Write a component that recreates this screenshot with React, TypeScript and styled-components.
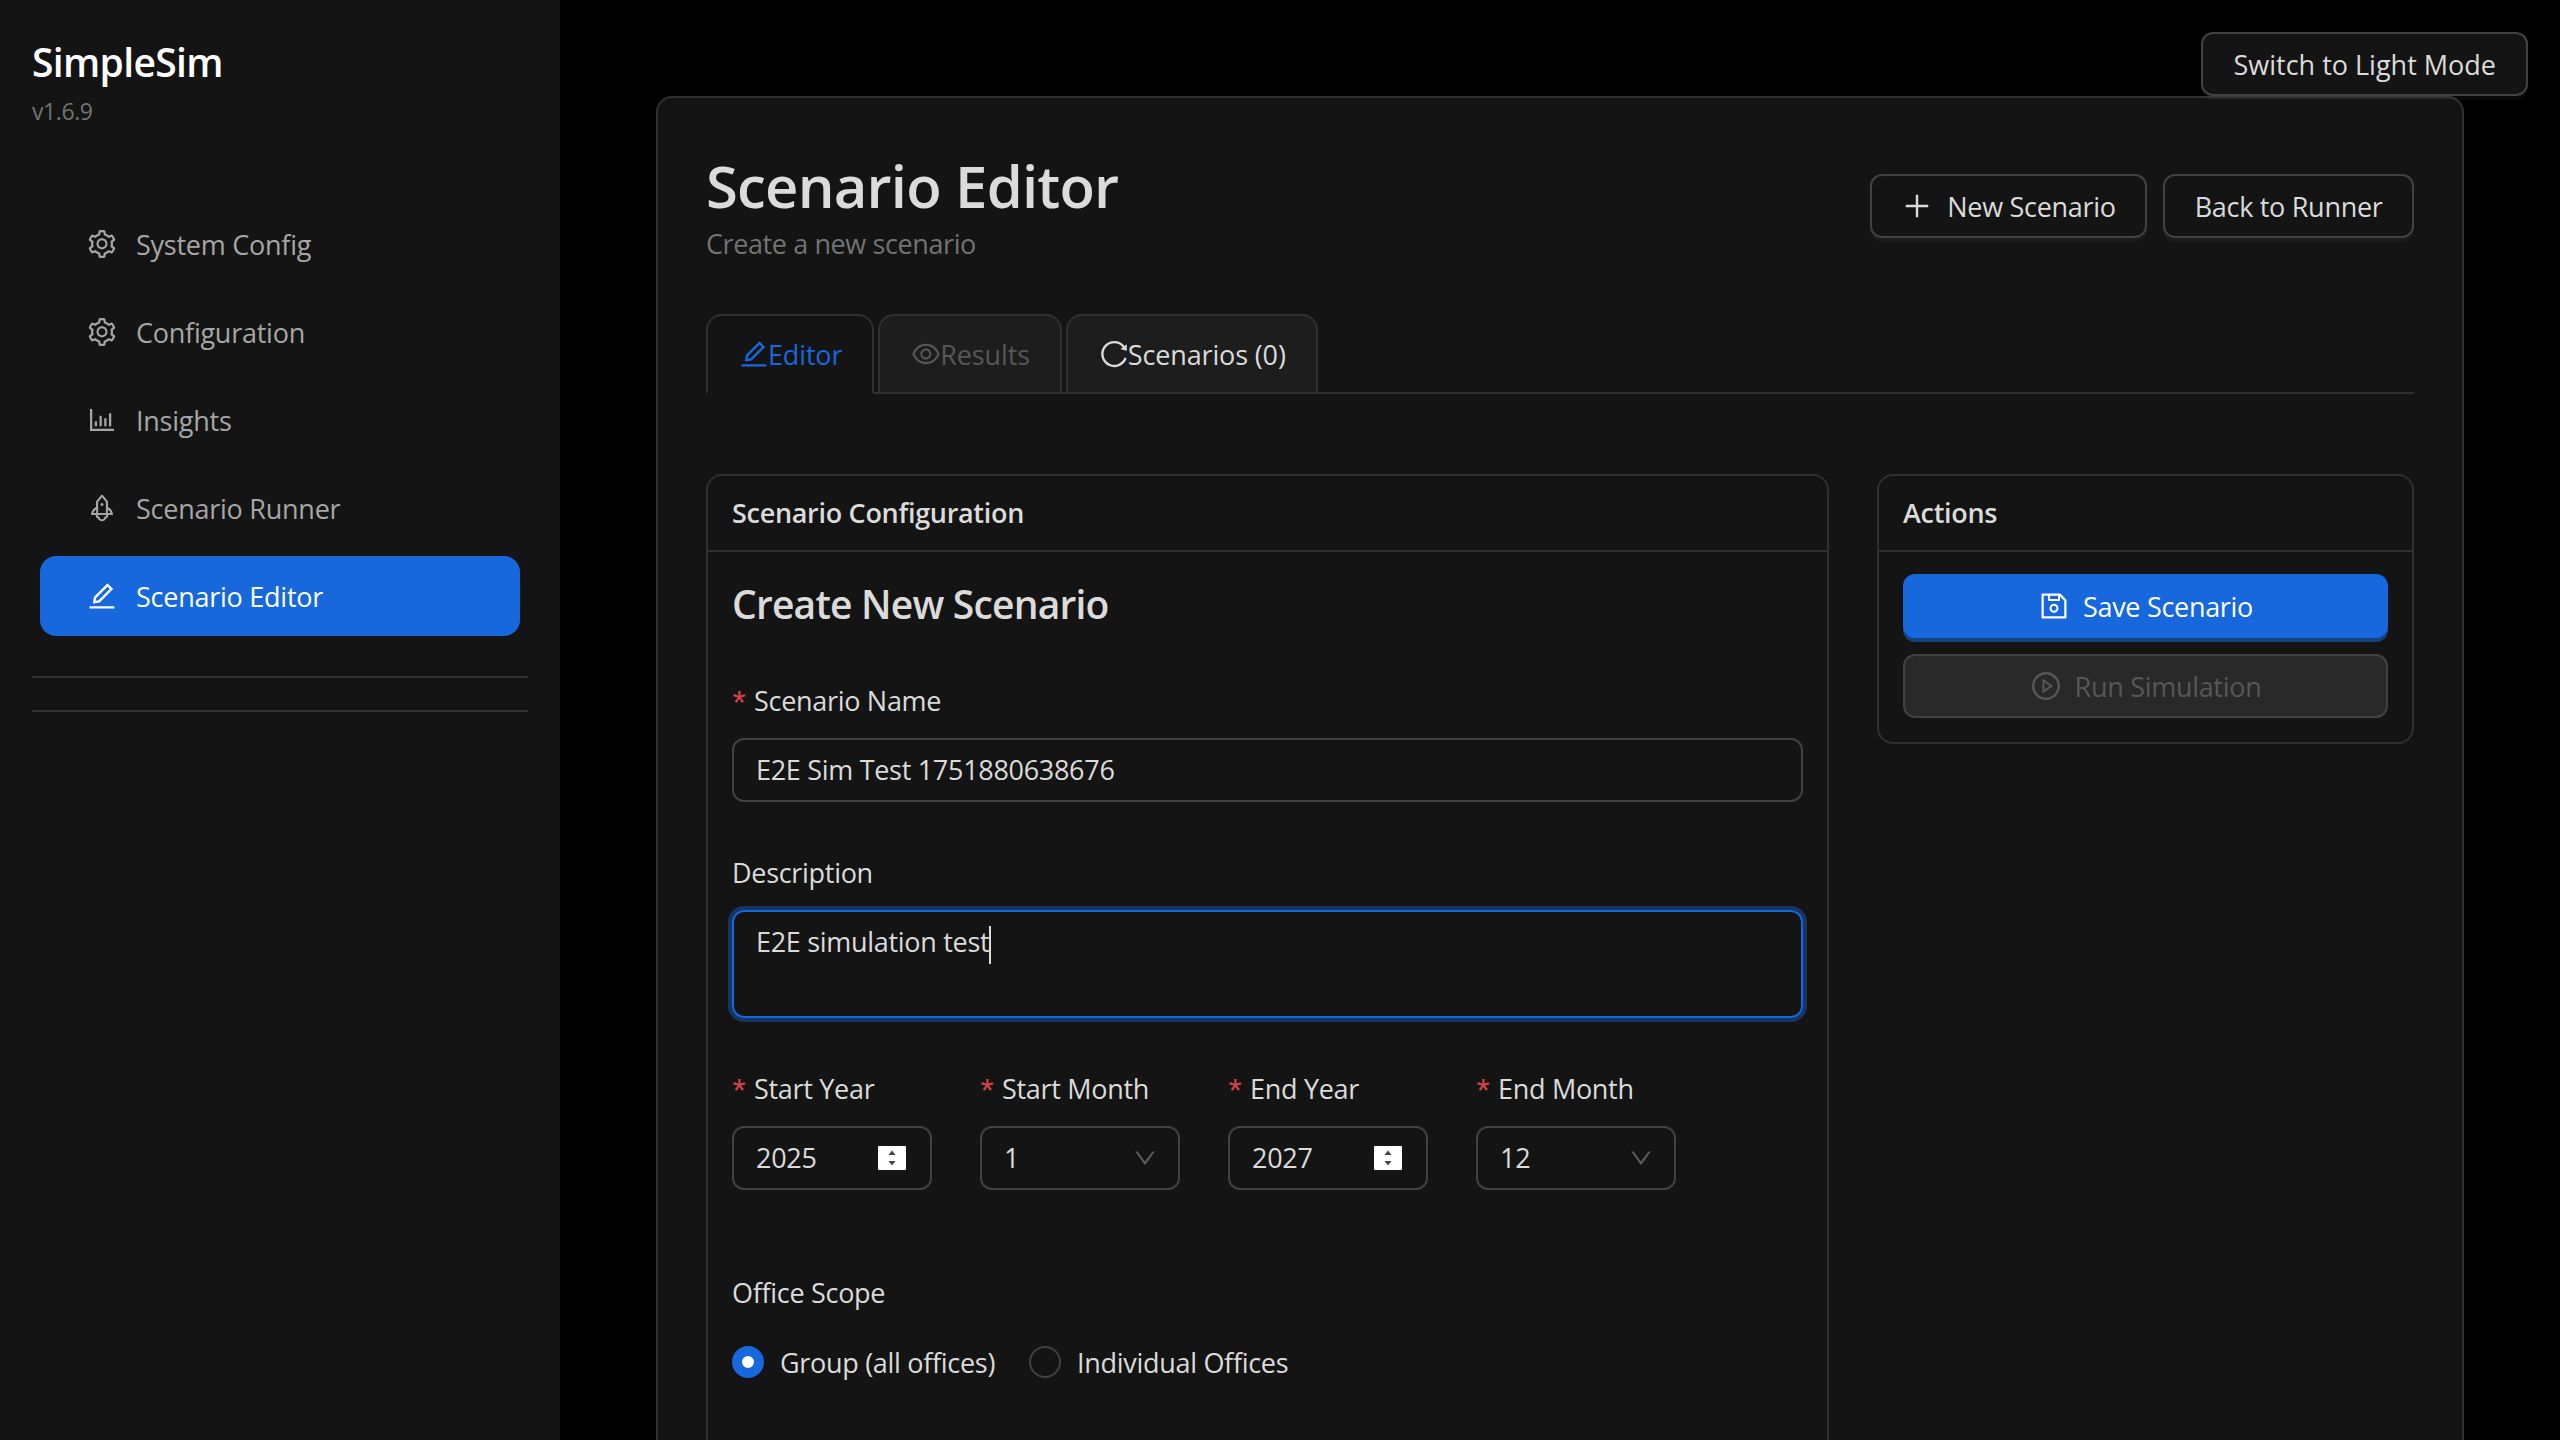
import styled, { createGlobalStyle } from "styled-components";
import {
  AiOutlineBarChart,
  AiOutlineDown,
  AiOutlineEdit,
  AiOutlineEye,
  AiOutlinePlayCircle,
  AiOutlinePlus,
  AiOutlineReload,
  AiOutlineRocket,
  AiOutlineSave,
  AiOutlineSetting,
} from "react-icons/ai";

const GlobalStyle = createGlobalStyle`
  html, body {
    margin: 0;
    padding: 0;
    background: #000;
    overflow: hidden;
  }
  * {
    box-sizing: border-box;
  }
  body {
    font-family: "Open Sans", "Noto Sans", sans-serif;
    font-size: 27px;
    letter-spacing: -0.3px;
    color: #dbdbdb;
  }
`;

const Shell = styled.div`
  position: relative;
  display: flex;
  width: 2560px;
  height: 1440px;
  overflow: hidden;
`;

const Sidebar = styled.aside`
  flex: 0 0 560px;
  background: #141414;
  padding: 32px;
`;

const Logo = styled.div`
  font-size: 39px;
  font-weight: 600;
  line-height: 60px;
  color: #fff;
  letter-spacing: -0.65px;
`;

const Version = styled.div`
  font-size: 23px;
  line-height: 38px;
  color: #737373;
  letter-spacing: -0.4px;
`;

const Nav = styled.nav`
  display: flex;
  flex-direction: column;
  gap: 8px;
  margin: 74px 8px 0;
`;

const NavItem = styled.div<{ $active?: boolean }>`
  display: flex;
  align-items: center;
  gap: 18px;
  height: 80px;
  padding-left: 46px;
  border-radius: 16px;
  letter-spacing: -0.25px;
  background: ${(p) => (p.$active ? "#1668dc" : "transparent")};
  color: ${(p) => (p.$active ? "#fff" : "#a6a6a6")};
  svg {
    font-size: 32px;
    flex: none;
  }
`;

const SideRule = styled.hr`
  height: 2px;
  border: 0;
  margin: 40px 0 0;
  background: #333;
  & + & {
    margin-top: 32px;
  }
`;

const Main = styled.main`
  flex: 1;
  padding: 96px 96px 0;
  min-width: 0;
`;

const ThemeToggle = styled.button`
  position: absolute;
  top: 32px;
  right: 32px;
  z-index: 2;
  height: 64px;
  padding: 0 30px;
  font: inherit;
  letter-spacing: 0;
  color: #dbdbdb;
  background: #141414;
  border: 2px solid #424242;
  border-radius: 12px;
  box-shadow: 0 4px 0 rgba(255, 255, 255, 0.03);
`;

const Page = styled.section`
  border: 2px solid #303030;
  border-radius: 16px;
  background: #141414;
  padding: 48px 48px 0;
  height: 1500px;
`;

const PageHeader = styled.header`
  display: flex;
  justify-content: space-between;
  align-items: flex-start;
`;

const Title = styled.h1`
  margin: 0;
  font-size: 58px;
  font-weight: 600;
  line-height: 80px;
  letter-spacing: -0.8px;
  color: #dbdbdb;
`;

const Subtitle = styled.div`
  line-height: 36px;
  letter-spacing: -0.4px;
  color: #737373;
`;

const HeaderActions = styled.div`
  display: flex;
  gap: 16px;
  margin-top: 28px;
`;

const Button = styled.button`
  display: inline-flex;
  align-items: center;
  justify-content: center;
  gap: 14px;
  height: 64px;
  padding: 0 29.5px;
  font: inherit;
  letter-spacing: inherit;
  color: #dbdbdb;
  background: transparent;
  border: 2px solid #424242;
  border-radius: 12px;
  box-shadow: 0 4px 0 rgba(255, 255, 255, 0.03);
  svg {
    font-size: 32px;
    flex: none;
  }
`;

const PrimaryButton = styled(Button)`
  width: 100%;
  gap: 13px;
  color: #fff;
  background: #1668dc;
  border-color: #1668dc;
  box-shadow: 0 4px 0 #15417e;
`;

const DisabledButton = styled(Button)`
  width: 100%;
  gap: 13px;
  color: #575757;
  background: #292929;
  box-shadow: none;
`;

const TabBar = styled.div`
  display: flex;
  gap: 4px;
  height: 80px;
  margin-top: 52px;
  border-bottom: 2px solid #303030;
`;

const Tab = styled.div<{ $active?: boolean; $disabled?: boolean }>`
  display: flex;
  align-items: center;
  height: ${(p) => (p.$active ? "80px" : "78px")};
  padding: 0 30px;
  border: 2px solid #303030;
  border-bottom: ${(p) => (p.$active ? "2px solid #141414" : "0")};
  border-radius: 16px 16px 0 0;
  letter-spacing: -0.15px;
  background: ${(p) => (p.$active ? "#141414" : "#1d1d1d")};
  color: ${(p) => (p.$active ? "#1668dc" : p.$disabled ? "#575757" : "#dbdbdb")};
  svg {
    font-size: 32px;
    flex: none;
    margin-right: -2px;
  }
`;

const Columns = styled.div`
  display: grid;
  grid-template-columns: 1123px 537px;
  column-gap: 48px;
  align-items: start;
  margin-top: 80px;
`;

const Card = styled.div`
  border: 2px solid #303030;
  border-radius: 16px;
  background: #141414;
`;

const CardHeader = styled.div`
  display: flex;
  align-items: center;
  height: 76px;
  padding: 0 24px 2px;
  font-weight: 600;
  border-bottom: 2px solid #303030;
`;

const CardBody = styled.div<{ $top?: number }>`
  padding: ${(p) => p.$top ?? 24}px 24px 24px;
`;

const ActionStack = styled.div`
  display: flex;
  flex-direction: column;
  gap: 16px;
`;

const FormTitle = styled.h2`
  margin: 0 0 46px;
  font-size: 39px;
  font-weight: 600;
  line-height: 56px;
  letter-spacing: -0.8px;
  color: #dbdbdb;
`;

const Field = styled.div`
  margin-bottom: 48px;
`;

const Label = styled.div<{ $required?: boolean }>`
  display: flex;
  align-items: center;
  height: 44px;
  margin-bottom: 16px;
  color: #dbdbdb;
  &::before {
    content: ${(p) => (p.$required ? '"*"' : "none")};
    width: 22px;
    color: #dc4446;
    font-family: "Liberation Mono", monospace;
    font-size: 34px;
    letter-spacing: 0;
    transform: translate(-3px, 6px);
  }
`;

const TextField = styled.div`
  display: flex;
  align-items: center;
  height: 64px;
  padding: 0 22px 1px;
  border: 2px solid #424242;
  border-radius: 12px;
`;

const TextArea = styled.div`
  height: 108px;
  padding: 9px 22px;
  line-height: 42px;
  border: 2px solid #1668dc;
  border-radius: 12px;
  box-shadow: 0 0 0 4px rgba(22, 104, 220, 0.4);
`;

const Caret = styled.span`
  display: inline-block;
  width: 2px;
  height: 38px;
  margin-left: 0;
  vertical-align: middle;
  background: #dbdbdb;
`;

const DateRow = styled.div`
  display: grid;
  grid-template-columns: repeat(4, 200px);
  column-gap: 48px;
  margin-bottom: 80px;
`;

const CompactField = styled(TextField)<{ $stepper?: boolean }>`
  justify-content: space-between;
  padding-right: ${(p) => (p.$stepper ? 24 : 20)}px;
`;

const Stepper = styled.svg`
  flex: none;
  width: 28px;
  height: 24px;
`;

const Chevron = styled(AiOutlineDown)`
  flex: none;
  font-size: 26px;
  color: #5c5c5c;
`;

const RadioRow = styled.div`
  display: flex;
  align-items: center;
  gap: 34px;
  height: 64px;
`;

const RadioOption = styled.div`
  display: flex;
  align-items: center;
  gap: 16px;
`;

const RadioDot = styled.span<{ $checked?: boolean }>`
  width: 32px;
  height: 32px;
  border-radius: 50%;
  background: ${(p) => (p.$checked ? "#fff" : "transparent")};
  border: ${(p) => (p.$checked ? "10px solid #1668dc" : "2px solid #424242")};
`;

const navItems = [
  { label: "System Config", Icon: AiOutlineSetting },
  { label: "Configuration", Icon: AiOutlineSetting },
  { label: "Insights", Icon: AiOutlineBarChart },
  { label: "Scenario Runner", Icon: AiOutlineRocket },
  { label: "Scenario Editor", Icon: AiOutlineEdit, active: true },
];

const dateFields = [
  { label: "Start Year", value: "2025", stepper: true },
  { label: "Start Month", value: "1" },
  { label: "End Year", value: "2027", stepper: true },
  { label: "End Month", value: "12" },
];

const SpinIcon = () => (
  <Stepper viewBox="0 0 28 24">
    <rect width="28" height="24" rx="1" fill="#fff" />
    <path d="M14 4.5l3.5 4.5h-7zM14 19.5l-3.5-4.5h7z" fill="#444" />
  </Stepper>
);

export default function App() {
  return (
    <Shell>
      <GlobalStyle />
      <Sidebar>
        <Logo>SimpleSim</Logo>
        <Version>v1.6.9</Version>
        <Nav>
          {navItems.map(({ label, Icon, active }) => (
            <NavItem key={label} $active={active}>
              <Icon />
              {label}
            </NavItem>
          ))}
        </Nav>
        <SideRule />
        <SideRule />
      </Sidebar>

      <ThemeToggle>Switch to Light Mode</ThemeToggle>

      <Main>
        <Page>
          <PageHeader>
            <div>
              <Title>Scenario Editor</Title>
              <Subtitle>Create a new scenario</Subtitle>
            </div>
            <HeaderActions>
              <Button>
                <AiOutlinePlus />
                New Scenario
              </Button>
              <Button>Back to Runner</Button>
            </HeaderActions>
          </PageHeader>

          <TabBar>
            <Tab $active>
              <AiOutlineEdit />
              Editor
            </Tab>
            <Tab $disabled>
              <AiOutlineEye />
              Results
            </Tab>
            <Tab>
              <AiOutlineReload />
              Scenarios (0)
            </Tab>
          </TabBar>

          <Columns>
            <Card>
              <CardHeader>Scenario Configuration</CardHeader>
              <CardBody>
                <FormTitle>Create New Scenario</FormTitle>
                <Field>
                  <Label $required>Scenario Name</Label>
                  <TextField>E2E Sim Test 1751880638676</TextField>
                </Field>
                <Field>
                  <Label>Description</Label>
                  <TextArea>
                    E2E simulation test
                    <Caret />
                  </TextArea>
                </Field>
                <DateRow>
                  {dateFields.map((f) => (
                    <div key={f.label}>
                      <Label $required>{f.label}</Label>
                      <CompactField $stepper={f.stepper}>
                        {f.value}
                        {f.stepper ? <SpinIcon /> : <Chevron />}
                      </CompactField>
                    </div>
                  ))}
                </DateRow>
                <Field>
                  <Label>Office Scope</Label>
                  <RadioRow>
                    <RadioOption>
                      <RadioDot $checked />
                      Group (all offices)
                    </RadioOption>
                    <RadioOption>
                      <RadioDot />
                      Individual Offices
                    </RadioOption>
                  </RadioRow>
                </Field>
              </CardBody>
            </Card>

            <Card>
              <CardHeader>Actions</CardHeader>
              <CardBody $top={22}>
                <ActionStack>
                  <PrimaryButton>
                    <AiOutlineSave />
                    Save Scenario
                  </PrimaryButton>
                  <DisabledButton>
                    <AiOutlinePlayCircle />
                    Run Simulation
                  </DisabledButton>
                </ActionStack>
              </CardBody>
            </Card>
          </Columns>
        </Page>
      </Main>
    </Shell>
  );
}
